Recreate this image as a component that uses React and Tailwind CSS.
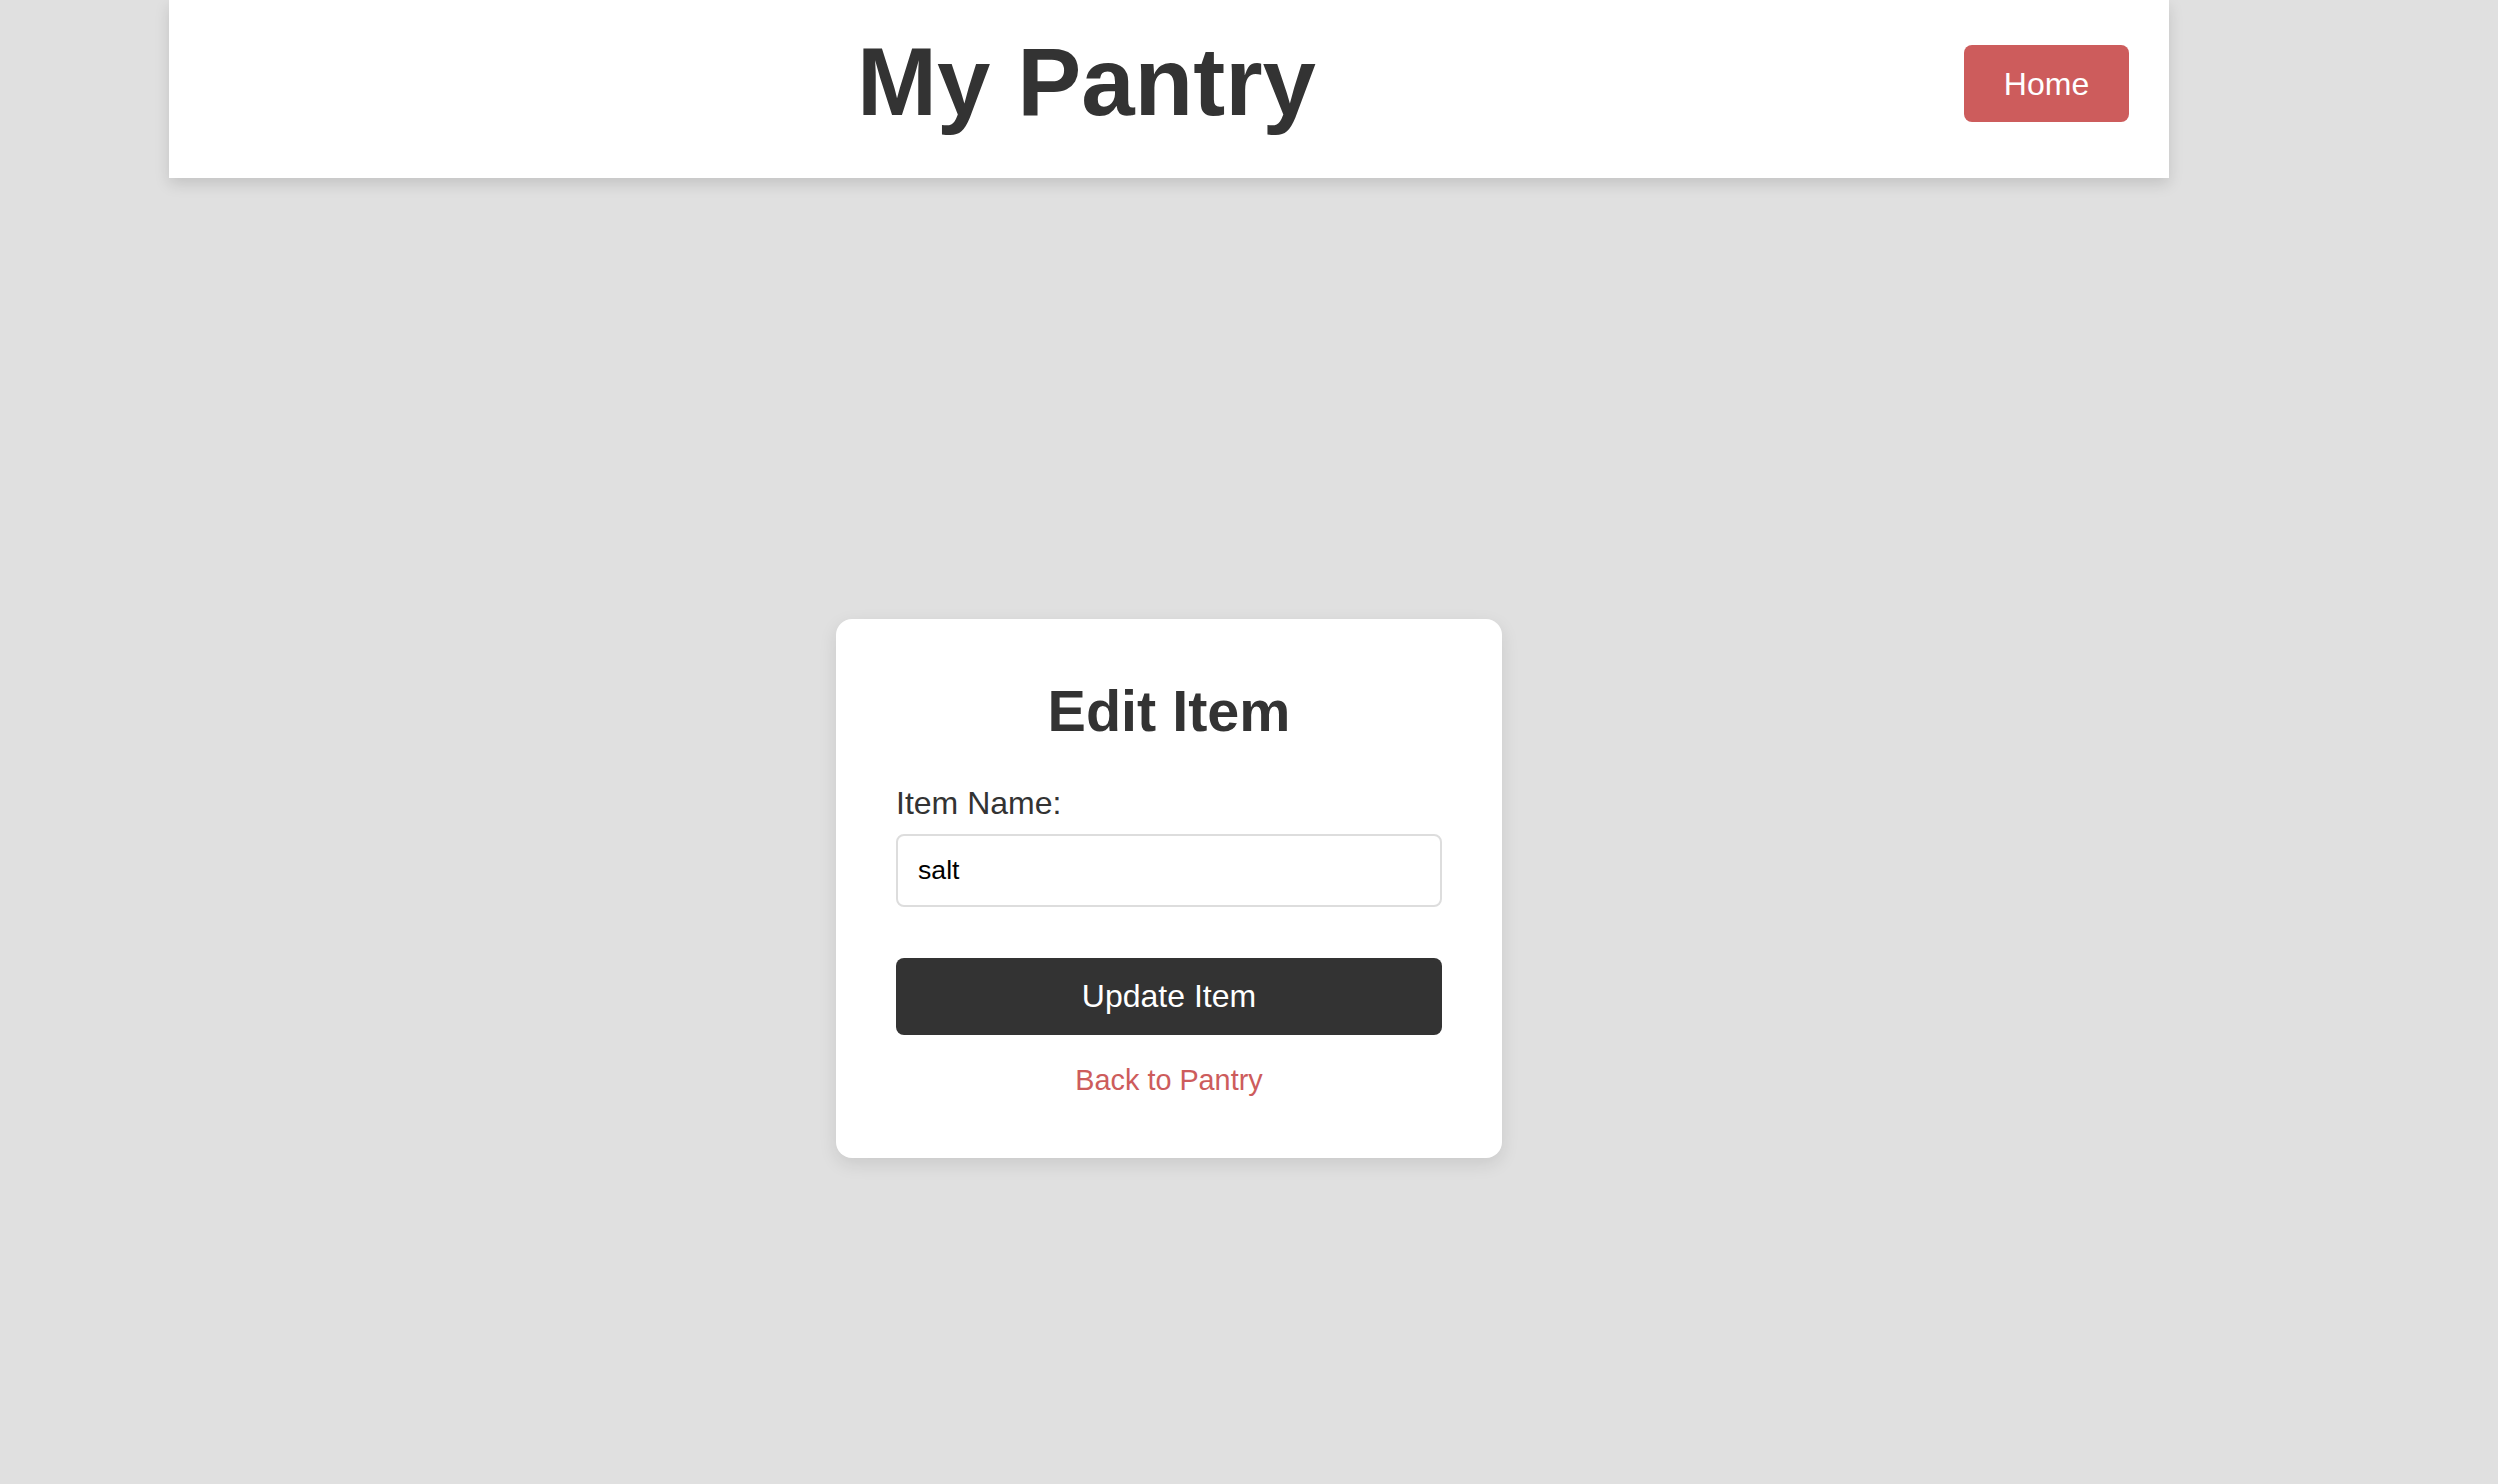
import { useState } from 'react'

export default function App() {
  const [name, setName] = useState('salt')

  return (
    <div className="min-h-screen bg-[#e0e0e0] font-['Liberation_Sans',Arial,sans-serif] text-[#333]">
      {/* Header */}
      <header className="ml-[169px] w-[2000px] h-[178px] bg-white flex items-start px-[40px] pt-[34px] shadow-[0_6px_14px_rgba(0,0,0,0.13)]">
        <div className="flex-1 text-center">
          <h1 className="text-[96px] leading-none font-bold text-[#333]">My Pantry</h1>
        </div>
        <button className="mt-[11px] w-[165px] h-[77px] rounded-[8px] bg-[#cd5c5c] text-white text-[32px] leading-none flex items-center justify-center">
          Home
        </button>
      </header>

      {/* Edit form */}
      <main className="ml-[169px] w-[2000px] flex justify-center pt-[441px] pb-[326px]">
        <div className="w-[666px] bg-white rounded-[16px] px-[60px] pt-[64px] pb-[61px] shadow-[0_6px_18px_rgba(0,0,0,0.1)]">
          <h2 className="text-[57.5px] leading-none font-bold text-center text-[#333]">Edit Item</h2>
          <form onSubmit={e => e.preventDefault()} className="mt-[46px]">
            <label className="block text-[32px] leading-none text-[#333]">Item Name:</label>
            <input
              value={name}
              onChange={e => setName(e.target.value)}
              className="mt-[15px] block w-full h-[73px] border-2 border-[#dddddd] rounded-[8px] px-[20px] text-[26.67px] text-black bg-white outline-none font-['Liberation_Sans',Arial,sans-serif]"
            />
            <button type="submit" className="mt-[51px] w-full h-[77px] rounded-[8px] bg-[#333333] text-white text-[32px] leading-none flex items-center justify-center">
              Update Item
            </button>
          </form>
          <div className="mt-[31px] text-center">
            <a href="#" className="text-[28.8px] leading-none text-[#cd5c5c]">Back to Pantry</a>
          </div>
        </div>
      </main>
    </div>
  )
}
